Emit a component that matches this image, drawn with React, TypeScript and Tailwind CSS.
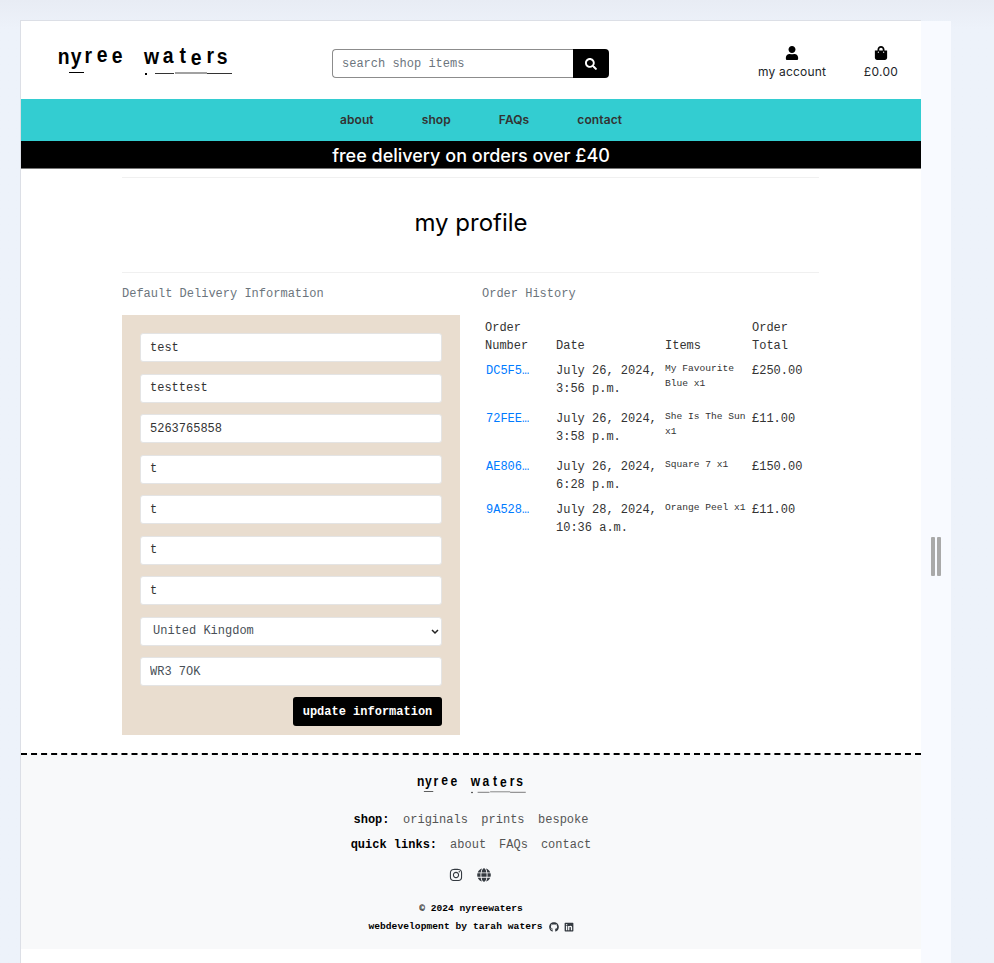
import { FaGithub, FaGlobe, FaInstagram, FaLinkedin, FaSearch, FaShoppingBag, FaUser } from "react-icons/fa";

const mono = "font-['Liberation_Mono','Courier_New',monospace]";
const inter = "font-['Inter',sans-serif]";

const fields = ["test", "testtest", "5263765858", "t", "t", "t", "t"];

const orders = [
  { id: "DC5F5…", date: "July 26, 2024,", time: "3:56 p.m.", items: "My Favourite Blue x1", total: "£250.00", row: "h-[48px]" },
  { id: "72FEE…", date: "July 26, 2024,", time: "3:58 p.m.", items: "She Is The Sun x1", total: "£11.00", row: "h-[48px]" },
  { id: "AE806…", date: "July 26, 2024,", time: "6:28 p.m.", items: "Square 7 x1", total: "£150.00", row: "h-[43px]" },
  { id: "9A528…", date: "July 28, 2024,", time: "10:36 a.m.", items: "Orange Peel x1", total: "£11.00", row: "h-[43px]" },
];

// typewriter style logo, every letter has its own width and sits a bit off the baseline
const logoLetters = [
  { c: "n", box: "w-[11px]", y: "translate-y-0" },
  { c: "y", box: "w-[12px] ml-[1px]", y: "translate-y-0" },
  { c: "r", box: "w-[7px] ml-[3px]", y: "-translate-y-[1px]" },
  { c: "e", box: "w-[11px] ml-[5px]", y: "-translate-y-[2px]" },
  { c: "e", box: "w-[11px] ml-[4px]", y: "-translate-y-[1px]" },
  { c: "w", box: "w-[16px] ml-[21px]", y: "translate-y-0" },
  { c: "a", box: "w-[12px] ml-[2px]", y: "-translate-y-[1px]" },
  { c: "t", box: "w-[7px] ml-[5px]", y: "-translate-y-[1px]" },
  { c: "e", box: "w-[12px] ml-[4px]", y: "translate-y-[1px]" },
  { c: "r", box: "w-[8px] ml-[4px]", y: "-translate-y-[1px]" },
  { c: "s", box: "w-[11px] ml-[3px]", y: "translate-y-0" },
];

function Logo() {
  return (
    <div className="flex flex-col w-[176px] h-[29px]">
      <div className="flex h-[21px] items-end text-black font-['Liberation_Sans',sans-serif] font-bold text-[22px] leading-[21px]">
        {logoLetters.map((l, i) => (
          <span key={i} className={`${l.box} ${l.y} inline-flex justify-center`}>
            <span className="inline-block scale-x-[.88]">{l.c}</span>
          </span>
        ))}
      </div>
      <div className="flex items-center mt-[4px] h-[3px]">
        <span className="ml-[11px] w-[15px] h-[1.5px] bg-black" />
        <span className="ml-[61px] w-[2px] h-[2px] bg-black translate-y-[1px]" />
        <span className="ml-[8px] w-[19px] h-[1.5px] bg-[#333] translate-y-[1px]" />
        <span className="ml-[1px] w-[32px] h-[1px] bg-[#444] translate-y-[0.5px]" />
        <span className="w-[25px] h-[1.5px] bg-[#333] translate-y-[1px]" />
      </div>
    </div>
  );
}

export default function App() {
  return (
    <div className="min-h-[963px] flex items-stretch bg-gradient-to-b from-[#e8ecf4] from-0% to-[#edf2fa] to-[3%] pt-[20px] pl-[20px]">
      <div className="w-[901px] shrink-0 bg-white border-t border-l border-[#dcdfe6] flex flex-col">
        <header className="h-[78px] flex items-center pl-[37px]">
          <div className="w-[274px] mt-[1px]">
            <Logo />
          </div>
          <form className="flex w-[277px] h-[29px] mt-[7px]">
            <input
              readOnly
              placeholder="search shop items"
              className={`w-[241px] h-full px-[9px] text-[12px] border border-[#8c8c8c] border-r-0 rounded-l-[4px] outline-none placeholder:text-[#6c757d] ${mono}`}
            />
            <button type="button" className="w-[36px] h-full bg-black rounded-r-[4px] flex items-center justify-center">
              <FaSearch className="text-white text-[12px]" />
            </button>
          </form>
          <div className={`flex ml-[149px] mt-[5px] text-[12px] leading-[16px] text-[#212529] ${inter}`}>
            <div className="w-[68px] flex flex-col items-center gap-[4px]">
              <FaUser className="text-black text-[14px]" />
              <span className="whitespace-nowrap tracking-[0.2px]">my account</span>
            </div>
            <div className="w-[34px] ml-[38px] flex flex-col items-center gap-[4px]">
              <FaShoppingBag className="text-black text-[14px]" />
              <span className="tracking-[0.3px]">£0.00</span>
            </div>
          </div>
        </header>

        <nav className={`h-[42px] bg-[#33cdd1] flex items-center justify-center gap-[48px] pl-[20px] text-[12px] font-semibold tracking-[0.1px] text-[#333] ${inter}`}>
          <span>about</span>
          <span>shop</span>
          <span>FAQs</span>
          <span>contact</span>
        </nav>
        <div className={`h-[28px] pt-px bg-black border-b border-[#777] flex items-center justify-center text-white text-[18px] font-medium ${inter}`}>
          free delivery on orders over £40
        </div>

        <main className="w-[697px] ml-[101px] flex flex-col">
          <hr className="mt-[8px] border-t border-[#f0f0f0]" />
          <h1 className={`h-[94px] pb-[4px] pl-[1px] flex items-center justify-center text-[24px] text-black ${inter}`}>my profile</h1>
          <hr className="border-t border-[#f0f0f0]" />

          <div className={`flex mt-[14px] text-[12px] ${mono}`}>
            <section className="w-[338px]">
              <h2 className="h-[14px] leading-[14px] text-[#6c757d]">Default Delivery Information</h2>
              <div className="mt-[14px] h-[420px] bg-[#e9ddcf] px-[18px] pt-[18px] flex flex-col">
                <div className="flex flex-col gap-[11.5px]">
                  {fields.map((value, i) => (
                    <input
                      key={i}
                      readOnly
                      value={value}
                      className="w-full h-[29px] px-[9px] bg-white rounded-[3px] border border-[#e4e4e4] text-[#333] outline-none"
                    />
                  ))}
                  <div className="relative">
                    <select className="appearance-none w-full h-[29px] pl-[12px] bg-white rounded-[3px] border border-[#e4e4e4] text-[#495057] outline-none">
                      <option>United Kingdom</option>
                    </select>
                    <svg viewBox="0 0 8 6" className="absolute right-[3px] top-[12px] w-[8px] h-[6px] pointer-events-none" fill="none" stroke="#222" strokeWidth="1.5">
                      <path d="M1 1 L4 4 L7 1" />
                    </svg>
                  </div>
                  <input
                    readOnly
                    value="WR3 7OK"
                    className="w-full h-[29px] px-[9px] bg-white rounded-[3px] border border-[#e4e4e4] text-[#495057] outline-none"
                  />
                </div>
                <div className="flex justify-end mt-[11px]">
                  <button type="button" className="w-[149px] h-[29px] bg-black rounded-[3px] text-white font-bold">
                    update information
                  </button>
                </div>
              </div>
            </section>

            <section className="ml-[22px] flex-1">
              <h2 className="h-[14px] leading-[14px] text-[#6c757d]">Order History</h2>
              <table className="mt-[10px] ml-[3px] table-fixed w-[325px] leading-[18px] text-[#333]">
                <colgroup>
                  <col className="w-[70px]" />
                  <col className="w-[110px]" />
                  <col className="w-[87px]" />
                  <col />
                </colgroup>
                <thead>
                  <tr className="h-[44px] align-top font-normal">
                    <th className="font-normal text-left align-bottom">Order<br />Number</th>
                    <th className="font-normal text-left align-bottom pl-px">Date</th>
                    <th className="font-normal text-left align-bottom">Items</th>
                    <th className="font-normal text-left align-bottom">Order<br />Total</th>
                  </tr>
                </thead>
                <tbody>
                  {orders.map((order) => (
                    <tr key={order.id} className={`align-top ${order.row}`}>
                      <td className="pt-[7px] pl-px text-[#007bff]">{order.id}</td>
                      <td className="pt-[7px] pl-px whitespace-nowrap">{order.date}<br />{order.time}</td>
                      <td className="pt-[6px] pr-px text-[9.6px] leading-[15px]">{order.items}</td>
                      <td className="pt-[7px]">{order.total}</td>
                    </tr>
                  ))}
                </tbody>
              </table>
            </section>
          </div>
        </main>

        <footer className={`mt-[18px] h-[196px] border-t-2 border-dashed border-black bg-[#f8f9fa] flex flex-col items-center text-[12px] ${mono}`}>
          <div className="mt-[20px] w-[110px] h-[18px] ml-px">
            <div className="origin-top-left scale-[.625]">
              <Logo />
            </div>
          </div>
          <p className="mt-[18px] h-[18px] leading-[18px] flex gap-[13.5px] text-[#555]">
            <b className="text-black">shop:</b>
            <span>originals</span>
            <span>prints</span>
            <span>bespoke</span>
          </p>
          <p className="mt-[7px] h-[18px] leading-[18px] flex gap-[13px] text-[#555]">
            <b className="text-black">quick links:</b>
            <span>about</span>
            <span>FAQs</span>
            <span>contact</span>
          </p>
          <div className="mt-[14px] -ml-[2px] flex gap-[14px] text-[14px] text-[#343a40]">
            <FaInstagram />
            <FaGlobe />
          </div>
          <p className="mt-[19px] text-[9.6px] leading-[15px] font-bold text-black">© 2024 nyreewaters</p>
          <p className="mt-[3px] text-[9.6px] leading-[15px] font-bold tracking-[0.05px] text-black flex items-center">
            webdevelopment by tarah waters
            <FaGithub className="ml-[6px] text-[#343a40] text-[10px]" />
            <FaLinkedin className="ml-[5px] text-[#343a40] text-[10px]" />
          </p>
        </footer>
      </div>

      <div className="w-[30px] shrink-0 mt-px bg-[#f8faff] flex items-start pt-[516px] pl-[10px] gap-[2px]">
        <span className="w-[4px] h-[39px] rounded-[1px] bg-[#a9a9a9]" />
        <span className="w-[4px] h-[39px] rounded-[1px] bg-[#a9a9a9]" />
      </div>
    </div>
  );
}
